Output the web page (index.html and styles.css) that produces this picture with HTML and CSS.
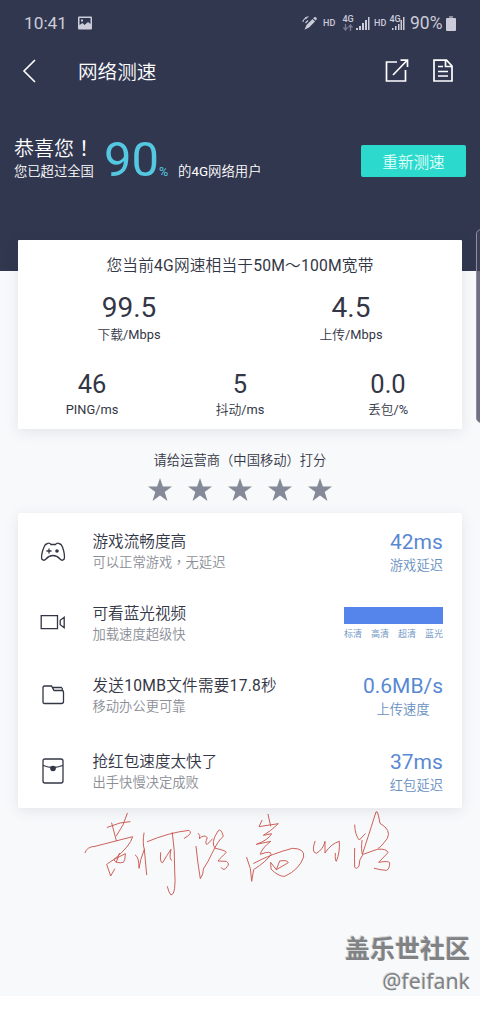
FILE: index.html
```html
<!DOCTYPE html>
<html lang="zh-CN">
<head>
<meta charset="utf-8">
<title>网络测速</title>
<link rel="stylesheet" href="styles.css">
</head>
<body>
<div class="screen">
  <header class="hero">
    <div class="status">
      <span class="clock">10:41</span>
      <svg class="photo" width="14" height="14" viewBox="0 0 14 14"><path fill="#cbcbd9" fill-rule="evenodd" d="M0 1.500Q0 .5 1 .5h12q1 0 1 1v11q0 1-1 1H1q-1 0-1-1zM1.500 2v7l3-2 2 2L10 6l2.500 2V2zM3 3.500h2v2H3z"/></svg>
      <div class="signals">
        <svg width="15" height="15" viewBox="0 0 15 15"><path d="M1 6q0-3 4-4M2.500 3q1-2 4-2.300M3.500 7l2.500-2.500" fill="none" stroke="#cbcbd9" stroke-width="1.100"/><path fill="#cbcbd9" d="M4.500 9l6-6 2.500 2.500-6 6-4.500 2.300zM11.200 2.300l1-1q1-.8 2 .2t.3 2l-1 1z"/></svg>
        <span class="hd">HD</span>
        <span class="net"><b>4G</b><svg width="10" height="7" viewBox="0 0 10 7"><path d="M2.500 0v5M.5 3.500l2 2.500 2-2.500M7.500 7V2M5.500 3.500l2-2.500 2 2.500" fill="none" stroke="#777a90" stroke-width="1.300"/></svg></span>
        <svg class="bars" width="14" height="13" viewBox="0 0 14 13"><path fill="#cbcbd9" d="M0 11h2v2H0zM3 9h2v4H3zM6 6h2v7H6zM9 3h2v10H9zM12 0h1.500v13H12z"/></svg>
        <span class="hd hd2">HD</span>
        <span class="net net2"><b>4G</b></span>
        <svg class="bars2" width="14" height="13" viewBox="0 0 14 13"><path fill="#cbcbd9" d="M1 11h1.500v2H1zM4 9h1.500v4H4zM7 7h1.500v6H7zM9.500 3H11v10H9.500zM12 0h1.500v13H12z"/></svg>
        <span class="percent">90%</span>
        <svg class="battery" width="10" height="15" viewBox="0 0 10 15"><path fill="#8d8f9f" d="M3 0h4v3H3z"/><path fill="#cbcbd9" d="M1 2h8q1 0 1 1v11q0 1-1 1H1q-1 0-1-1V3q0-1 1-1z"/></svg>
      </div>
    </div>
    <nav class="nav">
      <svg width="14" height="24" viewBox="0 0 14 24"><path d="M13 1L2 12l11 11" fill="none" stroke="#fff" stroke-width="1.600"/></svg>
      <h1 class="title">网络测速</h1>
      <svg class="share" width="24" height="24" viewBox="0 0 24 24"><path d="M12 3H1.500v19h19V11M8 16L22 1.500M15.500 1.200H22.500V8" fill="none" stroke="#fff" stroke-width="1.700"/></svg>
      <svg class="doc" width="20" height="24" viewBox="0 0 20 24"><path d="M1 1.200h12.500L19 7v15H1zM12.500 1.500V7.500H19M5 7.500h5M5 12.500h10M5 17h10" fill="none" stroke="#fff" stroke-width="1.700"/></svg>
    </nav>
    <section class="result">
      <div class="congrats"><p class="cheer">恭喜您<span class="punct" lang="zh-TW">！</span></p><p class="note">您已超过全国</p></div>
      <span class="score">90</span><span class="score-unit">%</span>
      <span class="users">的4G网络用户</span>
      <button class="retest">重新测速</button>
    </section>
  </header>
  <main class="content">
    <section class="card speeds">
      <h2 class="headline">您当前4G网速相当于50M～100M宽带</h2>
      <div class="pair">
        <div class="metric big"><strong>99.5</strong><span>下载/Mbps</span></div>
        <div class="metric big"><strong>4.5</strong><span>上传/Mbps</span></div>
      </div>
      <div class="trio">
        <div class="metric"><strong>46</strong><span>PING/ms</span></div>
        <div class="metric"><strong>5</strong><span>抖动/ms</span></div>
        <div class="metric"><strong>0.0</strong><span>丢包/%</span></div>
      </div>
    </section>
    <section class="rating">
      <p class="ask">请给运营商（中国移动）打分</p>
      <div class="stars">
        <svg viewBox="0 0 24 23"><path d="M12 0l2.900 8.500H24l-7.300 5.400 2.800 9.100-7.500-5.500L4.500 23l2.800-9.100L0 8.500h9.100z"/></svg>
        <svg viewBox="0 0 24 23"><path d="M12 0l2.900 8.500H24l-7.300 5.400 2.800 9.100-7.500-5.500L4.500 23l2.800-9.100L0 8.500h9.100z"/></svg>
        <svg viewBox="0 0 24 23"><path d="M12 0l2.900 8.500H24l-7.300 5.400 2.800 9.100-7.500-5.500L4.500 23l2.800-9.100L0 8.500h9.100z"/></svg>
        <svg viewBox="0 0 24 23"><path d="M12 0l2.900 8.500H24l-7.300 5.400 2.800 9.100-7.500-5.500L4.500 23l2.800-9.100L0 8.500h9.100z"/></svg>
        <svg viewBox="0 0 24 23"><path d="M12 0l2.900 8.500H24l-7.300 5.400 2.800 9.100-7.500-5.500L4.500 23l2.800-9.100L0 8.500h9.100z"/></svg>
      </div>
    </section>
    <section class="card abilities">
      <div class="row">
        <svg class="icon" viewBox="0 0 26 26"><path d="M7.500 5.500q2-1 3.500 1h4.500q1.500-2 3.500-1 2.500.5 3.500 3.500 2.700 8 1.700 12-2 2.500-4.200 0-3-3.500-7-3.500T6 21q-2.200 2.500-4.200 0-1-4 2.200-12 1-3 3.500-3.500zM6.500 13h5M9 10.500v5"/><circle class="dot" cx="17" cy="13" r="1.800"/></svg>
        <div class="info"><h3>游戏流畅度高</h3><p>可以正常游戏<span class="punct" lang="zh-TW">，</span>无延迟</p></div>
        <div class="value"><strong>42ms</strong><span>游戏延迟</span></div>
      </div>
      <div class="row">
        <svg class="icon" viewBox="0 0 26 26"><path d="M1.200 5.700h16.300v13H1.200zM24.200 7.200v10.500l-4-3v-4.500z"/></svg>
        <div class="info"><h3>可看蓝光视频</h3><p>加载速度超级快</p></div>
        <div class="quality"><div class="meter"></div><div class="levels"><span>标清</span><span>高清</span><span>超清</span><span>蓝光</span></div></div>
      </div>
      <div class="row tall">
        <svg class="icon" viewBox="0 0 26 26"><path d="M4.500 4h7l2.500 4.500h8q1.500 0 1.500 1.500v9.500q0 2-2 2h-17q-1.500 0-1.500-1.500V5.500Q3 4 4.500 4zM12 5.500h9.500q1 .5 1 3"/></svg>
        <div class="info"><h3 class="spaced">发送10MB文件需要17.8秒</h3><p>移动办公更可靠</p></div>
        <div class="value"><strong>0.6MB/s</strong><span>上传速度</span></div>
      </div>
      <div class="row">
        <svg class="icon" viewBox="0 0 26 26"><path d="M5 1h16q2 0 2 2v20q0 2-2 2H5q-2 0-2-2V3q0-2 2-2zM3.500 7.500q9 4 19 0"/><circle class="dot" cx="13" cy="10.500" r="2.800"/></svg>
        <div class="info"><h3>抢红包速度太快了</h3><p>出手快慢决定成败</p></div>
        <div class="value"><strong>37ms</strong><span>红包延迟</span></div>
      </div>
    </section>
    <svg class="ink" viewBox="0 24 990 306">
      <path d="M97 82L135 69 165 65M110 69L124 122M157 40Q148 75 124 108M30 158Q36 140 60 139L173 110Q166 138 116 179L151 161Q151 183 145 187Q125 192 116 179Q99 190 95 193L107 228L119 207M133 160L124 187"/>
      <path d="M207 99Q202 130 208 148L215 224M208 148Q195 180 192 205Q192 170 181 165M217 125Q280 98 342 91Q356 99 328 115M257 158Q254 190 263 188Q276 165 288 148Q281 180 290 181M292 98Q300 150 299 210Q304 285 288 285Q282 280 277 260"/>
      <path d="M370 100Q378 105 373 116Q388 102 397 113Q388 133 397 133L412 117M363 139Q368 190 376 236Q386 222 385 207Q400 185 411 160Q430 120 445 109Q438 83 429 93Q405 130 421 145Q451 151 454 157Q435 175 429 183L454 184Q465 192 457 199Q447 216 439 203"/>
      <path d="M579 43L587 78M561 61L552 80L610 71Q585 95 565 106L590 101Q580 120 544 133L587 124Q560 145 556 163Q590 150 588 164Q573 185 536 209L530 244Q530 205 515 172M536 190Q590 161 652 145Q690 145 686 171Q672 210 629 229Q610 230 588 207L587 187L604 209L640 188Q637 179 614 183L604 209"/>
      <path d="M720 124Q708 158 724 160Q745 148 750 124V158M750 158Q770 130 793 124Q795 158 784 184Q780 184 781 160"/>
      <path d="M839 75Q840 106 853 120L871 101M861 121Q858 150 862 163Q878 115 900 45Q906 15 915 70Q950 90 937 115Q915 145 910 145M839 145Q838 180 839 201Q844 210 852 198Q851 180 864 163L907 148Q935 145 939 158L911 187Q940 182 944 188Q944 207 935 211Q915 210 898 205"/>
    </svg>
    <footer class="mark"><p class="community">盖乐世社区</p><p class="author">@feifank</p></footer>
  </main>
  <div class="edge-handle"></div>
</div>
</body>
</html>
```

FILE: styles.css
```css
* { box-sizing: border-box; }
body, h1, h2, h3, p { margin: 0; font-weight: 400; }
body { background: #fff; font-family: Roboto, "Noto Sans CJK SC DemiLight", "Noto Sans CJK SC", sans-serif; color: #333645; }
strong { font-weight: 400; }
svg { display: block; flex: none; }
.punct { font-family: "Noto Sans CJK TC", sans-serif; line-height: 1; }
.screen { position: relative; width: 480px; height: 1013px; overflow: hidden; }
.hero { height: 271px; background: #323750; color: #fff; }

.status { display: flex; align-items: center; height: 46px; padding: 0 24px 0 24px; color: #cbcbd9; }
.clock { width: 54px; font-size: 17.3px; }
.signals { display: flex; align-items: center; margin-left: auto; }
.hd { margin-left: 6px; font-size: 9px; font-weight: 500; line-height: 12px; width: 13px; }
.net { display: flex; flex-direction: column; align-items: center; width: 12px; height: 16px; margin-left: 6px; }
.net b { font-size: 9px; line-height: 9px; font-weight: 500; }
.bars { margin-left: 2px; }
.hd2 { margin-left: 4px; }
.net2 { margin-left: 2px; }
.bars2 { margin-left: -10px; }
.percent { margin-left: 5px; width: 36px; font-size: 17.5px; }

.nav { display: flex; align-items: center; height: 50px; padding: 0 27px 0 22px; }
.title { margin: 3px 0 0 42px; font-size: 19.6px; line-height: 28px; }
.share { margin-left: auto; }
.doc { margin-left: 24px; width: 20px; }

.result { display: flex; height: 50px; margin-top: 37px; padding: 0 14px; }
.congrats { width: 91px; padding-top: 2px; white-space: nowrap; }
.cheer { height: 27px; font-size: 20px; line-height: 28px; }
.note { font-size: 13.3px; line-height: 20px; }
.score { width: 55px; padding-top: 1px; margin-left: -1px; font-size: 49px; line-height: 52px; color: #55c8e1; }
.score-unit { width: 19px; font-size: 12.5px; padding-top: 31px; line-height: 16px; color: #55c8e1; }
.users { padding-top: 29px; font-size: 13.4px; line-height: 20px; }
.retest { width: 105px; height: 32px; margin: 12px 0 0 auto; padding: 0; border: 0; border-radius: 2px; background: #2cdacd; color: #e0fffb; font: inherit; font-size: 15.6px; }

.content { height: 725px; padding: 0 18px; background: #f8f9fb; }
.card { position: relative; background: #fff; box-shadow: 0 3px 14px rgba(40, 50, 65, .1); }
.speeds { top: -31px; height: 189px; margin-bottom: -31px; border-radius: 1px; padding-top: 14px; text-align: center; }
.headline { font-size: 15.7px; line-height: 24px; letter-spacing: .18px; }
.pair { display: grid; grid-template-columns: 1fr 1fr; height: 89px; padding-top: 12px; }
.trio { display: grid; grid-template-columns: 1fr 1fr 1fr; }
.metric { display: flex; flex-direction: column; font-size: 12.8px; line-height: 18px; }
.metric strong { font-size: 25.5px; line-height: 34px; }
.big strong { font-size: 28px; line-height: 35px; }
.big span { margin-top: 1px; }

.rating { height: 84px; padding-top: 21px; text-align: center; }
.ask { font-size: 13.3px; line-height: 22px; }
.stars { display: flex; justify-content: center; gap: 16px; margin-top: 6px; }
.stars svg { width: 24px; height: 23px; fill: #858a99; }

.abilities { height: 295px; padding: 15px 19px 0 22px; border-radius: 2px; }
.row { display: flex; height: 72px; }
.tall { height: 76px; }
.icon { width: 26px; height: 26px; margin-top: 10px; fill: none; stroke: #333645; stroke-width: 1.3; }
.icon .dot { fill: #333645; stroke: none; }
.info { margin-left: 26.5px; padding-top: 2px; white-space: nowrap; }
.info h3 { font-size: 15.6px; line-height: 25px; }
.info .spaced { letter-spacing: .27px; }
.info p { height: 17px; margin-top: -1px; font-size: 13.3px; line-height: 17px; color: #8b8e96; }
.value { display: flex; flex-direction: column; margin-left: auto; text-align: center; color: #5988d3; }
.value strong { font-size: 21px; line-height: 28px; }
.value span { font-size: 13.3px; line-height: 19px; color: #6790c1; }
.quality { width: 99px; margin: 7px 0 0 auto; }
.meter { height: 17px; background: #5585eb; }
.levels { display: flex; justify-content: space-between; margin-top: 3px; font-size: 9px; line-height: 14px; color: #6790c1; }

.ink { width: 330px; height: 102px; margin-left: 57px; fill: none; stroke: #c8564e; stroke-width: 2.8; stroke-linejoin: round; stroke-linecap: round; }
.mark { padding: 19px 10px 0 0; margin-right: -18px; text-align: right; color: #808284; }
.community { font-family: "Noto Sans CJK SC", sans-serif; font-size: 25px; font-weight: 700; line-height: 36px; text-shadow: -1px -1px 0 #d1d2d4; }
.author { font-family: "Noto Sans", sans-serif; font-size: 21.3px; line-height: 31px; text-shadow: -1px -1px 0 #dcdddf; }
.edge-handle { position: absolute; right: -6px; top: 229px; width: 10px; height: 194px; border: 1px solid #8e8f9e; border-radius: 5px; background: rgba(65, 65, 90, .75); }
```
